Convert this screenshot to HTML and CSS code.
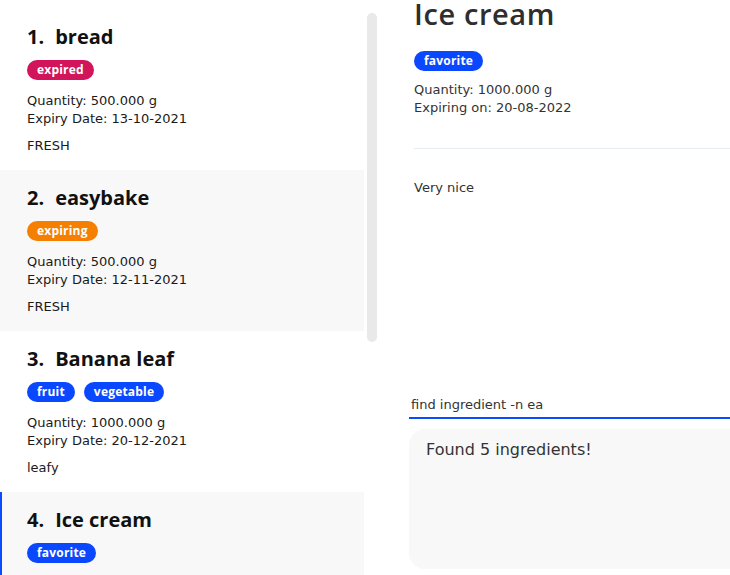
FILE: index.html
```html
<!DOCTYPE html>
<html lang="en">
<head>
<meta charset="utf-8">
<title>Ingredients</title>
<link rel="stylesheet" href="styles.css">
</head>
<body>
<div class="app">
  <div class="list-pane">
    <div class="list">
      <div class="card">
        <div class="card-title"><span class="num">1.</span>bread</div>
        <div class="tags"><span class="tag tag-expired">expired</span></div>
        <div class="info">
          <div>Quantity: 500.000 g</div>
          <div>Expiry Date: 13-10-2021</div>
        </div>
        <div class="remark">FRESH</div>
      </div>
      <div class="card card-alt">
        <div class="card-title"><span class="num">2.</span>easybake</div>
        <div class="tags"><span class="tag tag-expiring">expiring</span></div>
        <div class="info">
          <div>Quantity: 500.000 g</div>
          <div>Expiry Date: 12-11-2021</div>
        </div>
        <div class="remark">FRESH</div>
      </div>
      <div class="card">
        <div class="card-title"><span class="num">3.</span>Banana leaf</div>
        <div class="tags"><span class="tag tag-blue">fruit</span><span class="tag tag-blue">vegetable</span></div>
        <div class="info">
          <div>Quantity: 1000.000 g</div>
          <div>Expiry Date: 20-12-2021</div>
        </div>
        <div class="remark">leafy</div>
      </div>
      <div class="card card-alt card-selected">
        <div class="card-title"><span class="num">4.</span>Ice cream</div>
        <div class="tags"><span class="tag tag-blue">favorite</span></div>
      </div>
    </div>
    <div class="scroll-track"><div class="scroll-thumb"></div></div>
  </div>
  <div class="main">
    <div class="detail">
      <div class="detail-title">Ice cream</div>
      <div class="tags detail-tags"><span class="tag tag-blue">favorite</span></div>
      <div class="detail-info">
        <div>Quantity: 1000.000 g</div>
        <div>Expiring on: 20-08-2022</div>
      </div>
      <div class="divider"></div>
      <div class="detail-remark">Very nice</div>
    </div>
    <div class="command">find ingredient -n ea</div>
    <div class="result">Found 5 ingredients!</div>
  </div>
</div>
</body>
</html>
```
FILE: styles.css
```css
html, body {
  margin: 0;
  padding: 0;
  background: #ffffff;
  overflow: hidden;
}
body {
  font-family: "DejaVu Sans", "Open Sans", sans-serif;
  color: #1a1a1a;
}
.app {
  display: flex;
  width: 760px;
  height: 575px;
  overflow: hidden;
}
.list-pane {
  display: flex;
  width: 380px;
  flex: none;
}
.list {
  width: 364px;
  margin-top: 9px;
  display: flex;
  flex-direction: column;
}
.card {
  flex: none;
  height: 161px;
  box-sizing: border-box;
  padding: 14px 27px 0 27px;
  background: #ffffff;
}
.card-alt {
  background: #f8f8f8;
}
.card-selected {
  box-shadow: inset 2px 0 0 #0a4bff;
}
.card-title {
  font-family: "Open Sans", sans-serif;
  font-size: 20px;
  line-height: 28px;
  font-weight: 700;
  color: #111;
  white-space: nowrap;
}
.num {
  margin-right: 11px;
}
.tags {
  display: flex;
  gap: 9px;
  margin-top: 9px;
}
.tag {
  display: inline-block;
  height: 20px;
  line-height: 20px;
  padding: 0 10px;
  border-radius: 10px;
  font-family: "Open Sans", sans-serif;
  font-size: 12px;
  font-weight: 700;
  letter-spacing: 0.2px;
  color: #fff;
}
.tag-expired { background: #d2145a; }
.tag-expiring { background: #f57f00; }
.tag-blue { background: #0a48ff; }
.info {
  margin-top: 12px;
  font-size: 13px;
  line-height: 18px;
  color: #1a1a1a;
}
.remark {
  margin-top: 9px;
  font-size: 13px;
  line-height: 18px;
  color: #1a1a1a;
}
.scroll-track {
  width: 16px;
  display: flex;
  justify-content: center;
  padding-top: 13px;
}
.scroll-thumb {
  width: 10px;
  height: 329px;
  border-radius: 5px;
  background: #e9e9e9;
}
.main {
  flex: 1;
  margin-left: 29px;
  display: flex;
  flex-direction: column;
}
.detail {
  flex: 1;
  padding-left: 5px;
  color: #333;
}
.detail-title {
  font-family: "Open Sans", sans-serif;
  font-size: 29px;
  line-height: 28px;
  font-weight: 600;
  letter-spacing: 0.6px;
  color: #2e2e2e;
}
.detail-tags {
  margin-top: 23px;
}
.detail-info {
  margin-top: 10px;
  font-size: 13px;
  line-height: 18px;
  color: #333;
}
.divider {
  margin-top: 31px;
  height: 1px;
  background: #e6ecf2;
}
.detail-remark {
  margin-top: 30px;
  font-size: 13px;
  line-height: 18px;
  color: #333;
}
.command {
  height: 25px;
  line-height: 25px;
  padding-left: 2px;
  font-size: 13px;
  color: #333;
  border-bottom: 2px solid #0a4bff;
}
.result {
  margin-top: 10px;
  margin-bottom: 6px;
  height: 140px;
  box-sizing: border-box;
  padding: 9px 17px;
  border-radius: 16px;
  background: #f8f8f8;
  font-size: 16px;
  line-height: 24px;
  color: #333;
}
```
